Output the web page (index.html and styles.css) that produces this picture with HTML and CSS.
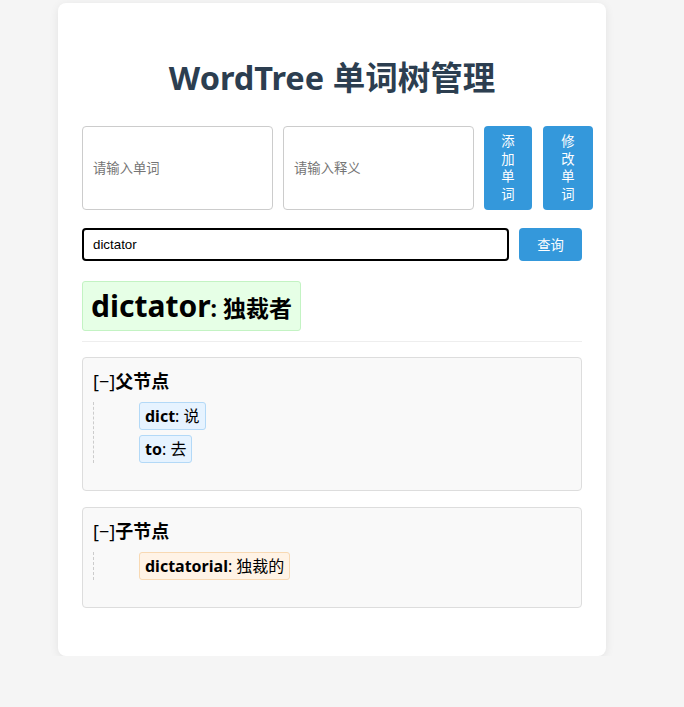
FILE: index.html
```html
<!DOCTYPE html>
<html lang="zh">
<head>
<meta charset="utf-8">
<title>WordTree 单词树管理</title>
<link rel="stylesheet" href="styles.css">
</head>
<body>
<div class="app">
  <h1 class="title">WordTree 单词树管理</h1>
  <div class="edit-row">
    <input class="field field-word" type="text" placeholder="请输入单词">
    <input class="field field-meaning" type="text" placeholder="请输入释义">
    <button class="btn btn-add">添加单词</button>
    <button class="btn btn-edit">修改单词</button>
  </div>
  <div class="search-row">
    <input class="search-input" type="text" value="dictator">
    <button class="btn btn-search">查询</button>
  </div>
  <div class="result"><span class="result-word">dictator</span>: 独裁者</div>
  <hr class="divider">
  <section class="tree-box">
    <h3 class="tree-head"><span class="toggle">[−]</span>父节点</h3>
    <ul class="tree">
      <li><span class="chip chip-parent"><b>dict</b>: 说</span></li>
      <li><span class="chip chip-parent"><b>to</b>: 去</span></li>
    </ul>
  </section>
  <section class="tree-box">
    <h3 class="tree-head"><span class="toggle">[−]</span>子节点</h3>
    <ul class="tree">
      <li><span class="chip chip-child"><b>dictatorial</b>: 独裁的</span></li>
    </ul>
  </section>
</div>
</body>
</html>
```
FILE: styles.css
```css
html, body {
  margin: 0;
  padding: 0;
  background: #f5f5f5;
}
body {
  font-family: "Noto Sans", "Noto Sans CJK SC", sans-serif;
  color: #000;
  padding-top: 3px;
}
.app {
  width: 500px;
  margin-left: 58px;
  padding: 24px 24px 32px;
  background: #fff;
  border-radius: 8px;
  box-shadow: 0 2px 10px rgba(0, 0, 0, 0.08);
}
.title {
  margin: 28px 0 25px;
  font-size: 32.5px;
  line-height: 46px;
  text-align: center;
  color: #2c3e50;
  font-weight: 700;
}
.edit-row {
  display: flex;
  align-items: stretch;
  gap: 10px;
  width: 511px;
}
.field {
  flex: none;
  width: 191px;
  box-sizing: border-box;
  border: 1px solid #ccc;
  border-radius: 4px;
  padding: 0 10px;
  font-family: "Liberation Sans", "Noto Sans CJK SC", sans-serif;
  font-size: 13.33px;
  outline: none;
}
.field::placeholder {
  color: #757575;
}
.btn {
  border: none;
  border-radius: 4px;
  background: #3498db;
  color: #fff;
  font-family: "Liberation Sans", "Noto Sans CJK SC", sans-serif;
  font-size: 13.33px;
  cursor: pointer;
}
.btn-add {
  flex: none;
  width: 48px;
  padding: 7px 14px;
  line-height: 17.5px;
}
.btn-edit {
  flex: none;
  width: 50px;
  margin-left: 1px;
  padding: 7px 15px;
  line-height: 17.5px;
}
.search-row {
  display: flex;
  gap: 10px;
  margin-top: 18px;
  height: 33px;
}
.search-input {
  flex: none;
  width: 427px;
  box-sizing: border-box;
  border: 2px solid #000;
  border-radius: 4px;
  padding: 0 9px;
  font-family: "Liberation Sans", sans-serif;
  font-size: 13.33px;
  outline: none;
}
.btn-search {
  flex: none;
  width: 63px;
  padding: 0;
}
.result {
  display: inline-block;
  margin-top: 20px;
  padding: 4px 8px 0;
  background: #e6ffe6;
  border: 1px solid #c3f3c3;
  border-radius: 3px;
  font-size: 23px;
  font-weight: 700;
  line-height: 44px;
  vertical-align: top;
}
.result-word {
  font-size: 30px;
  line-height: 1;
}
.divider {
  margin: 10px 0 15px;
  border: none;
  border-top: 1px solid #eee;
  height: 0;
}
.tree-box {
  background: #f9f9f9;
  border: 1px solid #ddd;
  border-radius: 4px;
  padding: 12px 10px;
  margin-bottom: 16px;
}
.tree-head {
  margin: 0 0 10px;
  font-size: 18px;
  line-height: 22px;
  font-weight: 700;
}
.toggle {
  font-weight: 400;
}
.tree {
  list-style: none;
  margin: 0 0 15px;
  padding: 0 0 0 45px;
  border-left: 1px dashed #ccc;
}
.tree li + li {
  margin-top: 5px;
}
.chip {
  display: inline-block;
  padding: 2px 5px;
  border: 1px solid #b3d9f7;
  border-radius: 3px;
  background: #e6f3ff;
  font-size: 16px;
  line-height: 22px;
}
.chip-child {
  background: #fff3e6;
  border-color: #f8d9b3;
}
```
